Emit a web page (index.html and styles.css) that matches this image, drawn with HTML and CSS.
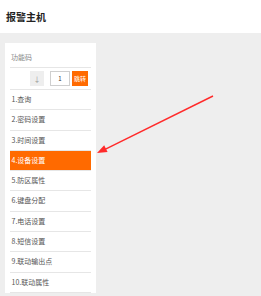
FILE: index.html
```html
<!DOCTYPE html>
<html lang="zh-CN">
<head>
    <meta charset="UTF-8">
    <meta name="viewport" content="width=device-width, initial-scale=1.0">
    <title>报警主机</title>
    <link rel="stylesheet" href="styles.css">
</head>
<body>
    <div class="header">
        <h1>报警主机</h1>
    </div>

    <div class="main">
        <div class="panel">
            <div class="panel-title">功能码</div>
            <div class="toolbar">
                <button class="btn-down">↓</button>
                <input class="page-input" type="text" value="1">
                <button class="btn-jump">跳转</button>
            </div>
            <ul class="menu">
                <li>1.查询</li>
                <li>2.密码设置</li>
                <li>3.时间设置</li>
                <li class="active">4.设备设置</li>
                <li>5.防区属性</li>
                <li>6.键盘分配</li>
                <li>7.电话设置</li>
                <li>8.短信设置</li>
                <li>9.联动输出点</li>
                <li>10.联动属性</li>
            </ul>
        </div>
    </div>

    <!-- annotation arrow -->
    <svg class="arrow" width="261" height="296" viewBox="0 0 261 296">
        <line x1="213" y1="96" x2="104" y2="149.8" stroke="#ff2a2a" stroke-width="1.4" />
        <polygon points="97,153 107.6,152 104.2,145.2" fill="#ff2a2a" />
    </svg>
</body>
</html>
```

FILE: styles.css
```css
body {
    margin: 0;
    background-color: #eeeeee;
    font-family: "Noto Sans CJK SC", "DejaVu Sans", sans-serif;
    height: 296px;
    overflow: hidden;
    position: relative;
}

.header {
    background-color: white;
    height: 33px;
    padding-left: 6px;
    display: flex;
    align-items: center;
}

.header h1 {
    margin: 0;
    font-size: 10px;
    line-height: 10px;
    font-weight: bold;
    color: #222;
}

.main {
    padding: 10px 0 0 5px;
}

.panel {
    background-color: white;
    width: 81px;
    height: 250px;
    padding: 0 5px;
}

.panel-title {
    padding: 10px 1px 6px;
    font-size: 7px;
    line-height: 8px;
    color: #888;
    border-bottom: 1px solid #e6e6e6;
}

.toolbar {
    display: flex;
    justify-content: flex-end;
    align-items: center;
    padding: 3px 3px 3px 0;
    border-bottom: 1px solid #e6e6e6;
}

.btn-down {
    width: 14px;
    height: 15px;
    margin-right: 6px;
    padding: 0;
    border: none;
    background-color: #eeeeee;
    color: #999;
    font-size: 7px;
    font-family: inherit;
}

.page-input {
    width: 20px;
    height: 15px;
    box-sizing: border-box;
    margin: 0 2px 0 0;
    padding: 0;
    border: 1px solid #cfcfcf;
    text-align: center;
    font-size: 6px;
    font-family: inherit;
    color: #333;
}

.btn-jump {
    width: 16px;
    height: 15px;
    padding: 0;
    border: none;
    background-color: #ff6a00;
    color: white;
    font-size: 6px;
    font-family: inherit;
}

.menu {
    list-style: none;
    margin: 0;
    padding: 0;
}

.menu li {
    height: 19.3px;
    line-height: 19.3px;
    padding-left: 1.5px;
    font-size: 7px;
    color: #555;
    border-bottom: 1px solid #e6e6e6;
}

.menu li.active {
    background-color: #ff6a00;
    color: white;
}

.arrow {
    position: absolute;
    left: 0;
    top: 0;
}
```
